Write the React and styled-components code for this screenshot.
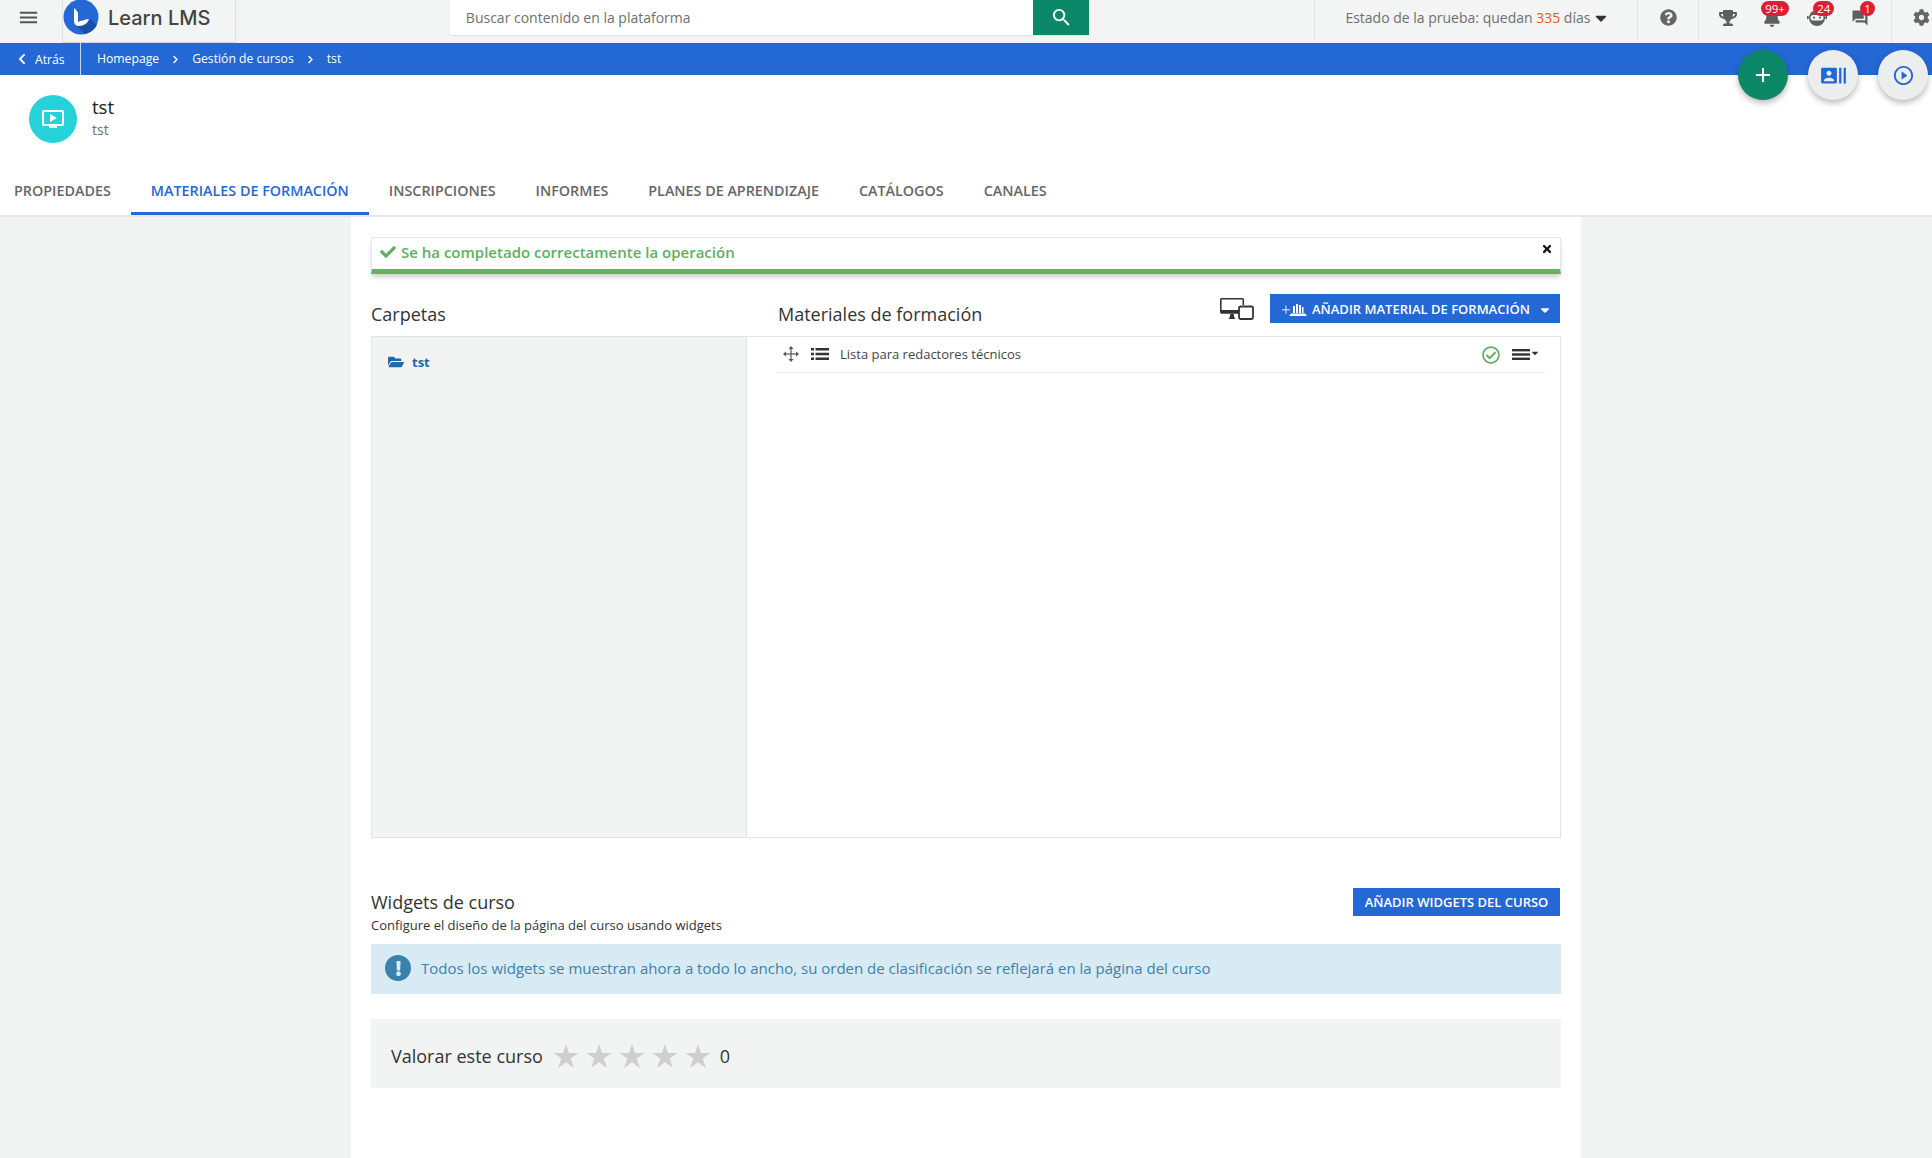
import React from 'react';
import styled, { createGlobalStyle } from 'styled-components';
import {
	FaBell,
	FaCaretDown,
	FaCheck,
	FaChevronLeft,
	FaChevronRight,
	FaCog,
	FaExclamation,
	FaFolderOpen,
	FaQuestionCircle,
	FaRegCheckCircle,
	FaTimes,
	FaTrophy,
} from 'react-icons/fa';
import {
	MdAdd,
	MdForum,
	MdMenu,
	MdOndemandVideo,
	MdPlayCircleOutline,
	MdRecentActors,
	MdSearch,
} from 'react-icons/md';

const GlobalStyle = createGlobalStyle`
	html, body {
		margin: 0;
		padding: 0;
		background: #f2f4f4;
	}
	* {
		box-sizing: border-box;
	}
`;

const Page = styled.div`
	position: relative;
	width: 1932px;
	height: 1158px;
	overflow: hidden;
	background: #f2f4f4;
	font-family: 'Open Sans', 'Noto Sans', sans-serif;
	color: #333;
`;

/* top bar */
const TopBar = styled.div`
	display: flex;
	height: 43px;
	background: #f3f4f4;
`;

const MenuButton = styled.div`
	width: 62px;
	display: flex;
	align-items: center;
	padding: 0 0 8px 17px;
	color: #555;
	font-size: 23px;
`;

const LogoBox = styled.div`
	width: 174px;
	display: flex;
	align-items: flex-start;
	gap: 9px;
	border-left: 1px solid #dfe1e1;
	border-right: 1px solid #dfe1e1;
	border-bottom: 1px solid #cfd3d8;
`;

const LogoText = styled.span`
	font-family: 'Inter', sans-serif;
	font-weight: 500;
	font-size: 20px;
	line-height: 36px;
	color: #444;
`;

const SearchBox = styled.div`
	margin-left: 214px;
	width: 640px;
	height: 35px;
	display: flex;
	background: #fff;
	border-radius: 0 0 2px 2px;
	box-shadow: 0 1px 1px rgba(0, 0, 0, 0.08);
`;

const SearchText = styled.div`
	flex: 1;
	padding-left: 16px;
	font-size: 14px;
	line-height: 35px;
	color: #6f6f6f;
`;

const SearchButton = styled.div`
	width: 56px;
	display: flex;
	align-items: center;
	justify-content: center;
	background: #0c8768;
	color: #fff;
	font-size: 23px;
`;

const TopSection = styled.div`
	display: flex;
	align-items: center;
	width: ${(p) => p.$width}px;
	margin-left: ${(p) => p.$offset || 0}px;
	padding-left: ${(p) => p.$pad}px;
	padding-bottom: 8px;
	border-left: 1px solid #e2e4e4;
	color: #666;
`;

const TrialText = styled.span`
	font-size: 14px;
	color: #6f6f6f;
	b {
		font-weight: 400;
		color: #f0522c;
	}
`;

const TrialCaret = styled.span`
	margin-left: 2px;
	font-size: 18px;
	color: #333;
	display: flex;
`;

const NoticeIcon = styled.div`
	position: relative;
	display: flex;
	justify-content: center;
	width: ${(p) => p.$width || 18}px;
	margin-right: ${(p) => p.$gap || 0}px;
	font-size: 18px;
	color: #5f5f5f;
`;

const Badge = styled.span`
	position: absolute;
	top: -8px;
	left: ${(p) => p.$left}px;
	min-width: 15px;
	height: 15px;
	padding: 0 4px;
	border-radius: 8px;
	background: #dc1f35;
	color: #fff;
	font-size: 11.5px;
	line-height: 15px;
	text-align: center;
`;

/* breadcrumb bar */
const CrumbBar = styled.div`
	display: flex;
	height: 32px;
	background: #2468d6;
	color: #fff;
	font-size: 12.2px;
`;

const BackLink = styled.div`
	width: 81px;
	display: flex;
	align-items: center;
	gap: 7px;
	padding-left: 16px;
	border-right: 1px solid #c9d9f3;
`;

const Crumbs = styled.div`
	display: flex;
	align-items: center;
	padding-left: 16px;
	padding-bottom: 1px;
`;

const CrumbArrow = styled.span`
	display: flex;
	margin: 1px 12px 0;
	font-size: 9px;
`;

const FloatButton = styled.div`
	position: absolute;
	top: 50px;
	left: ${(p) => p.$left}px;
	width: 50px;
	height: 50px;
	border-radius: 50%;
	display: flex;
	align-items: center;
	justify-content: center;
	background: ${(p) => (p.$green ? '#0c8768' : '#eceeee')};
	color: ${(p) => (p.$green ? '#fff' : '#2468d6')};
	font-size: ${(p) => p.$size}px;
	box-shadow: 0 3px 6px rgba(0, 0, 0, 0.28);
`;

/* course header */
const CourseHeader = styled.div`
	height: 80px;
	display: flex;
	align-items: flex-start;
	gap: 15px;
	padding: 20px 0 0 29px;
	background: #fff;
`;

const CourseBadge = styled.div`
	width: 48px;
	height: 48px;
	border-radius: 50%;
	background: #26d2da;
	color: #fff;
	display: flex;
	align-items: center;
	justify-content: center;
	font-size: 24px;
`;

const CourseName = styled.div`
	font-size: 18.5px;
	line-height: 23px;
	font-weight: 500;
	color: #222;
`;

const CourseSub = styled.div`
	font-size: 14px;
	line-height: 23px;
	color: #6f6f6f;
`;

/* tabs */
const TabBar = styled.div`
	display: flex;
	height: 62px;
	padding-top: 10px;
	background: #fff;
	border-bottom: 2px solid #e6e8e8;
`;

const Tab = styled.div`
	height: 50px;
	padding: 15px 20px 0;
	margin-left: ${(p) => p.$first || 0}px;
	font-size: 14.33px;
	line-height: 22px;
	font-weight: 600;
	color: ${(p) => (p.$active ? '#2468d6' : '#666')};
	border-bottom: 3px solid ${(p) => (p.$active ? '#2468d6' : 'transparent')};
`;

/* main column */
const Column = styled.div`
	width: 1230px;
	height: 951px;
	margin: 0 auto;
	padding: 20px 20px 0;
	background: #fff;
`;

const Alert = styled.div`
	height: 37px;
	display: flex;
	align-items: center;
	gap: 5px;
	padding: 0 8px 3px 8px;
	border: 1px solid #e5e7e7;
	border-bottom: 5px solid #66b168;
	box-shadow: 0 4px 5px -1px rgba(0, 0, 0, 0.2);
	color: #5fae62;
	font-size: 15px;
	font-weight: 600;
`;

const AlertClose = styled.span`
	margin-left: auto;
	margin-top: -6px;
	margin-right: -1px;
	display: flex;
	color: #111;
	font-size: 12px;
`;

const MaterialsHead = styled.div`
	display: flex;
	align-items: flex-end;
	height: 62px;
`;

const SectionTitle = styled.h2`
	margin: 0;
	font-size: 18px;
	line-height: 24px;
	font-weight: 400;
	color: #333;
	padding-top: ${(p) => p.$pt || 0}px;
	padding-bottom: ${(p) => p.$pb || 0}px;
`;

const FoldersTitle = styled(SectionTitle)`
	width: 407px;
`;

const HeadActions = styled.div`
	margin-left: auto;
	display: flex;
	align-items: center;
	gap: 16px;
	margin-bottom: 13px;
`;

const PrimaryButton = styled.div`
	display: flex;
	align-items: center;
	height: ${(p) => p.$height}px;
	width: ${(p) => p.$width}px;
	margin-right: 1px;
	padding-left: ${(p) => (p.$center ? 0 : 12)}px;
	justify-content: ${(p) => (p.$center ? 'center' : 'flex-start')};
	background: #2468d6;
	color: #fff;
	font-size: 13px;
	font-weight: 600;
	white-space: nowrap;
`;

const ButtonCaret = styled.span`
	display: flex;
	margin-left: 8px;
	margin-top: 3px;
	font-size: 14px;
`;

const Panel = styled.div`
	display: grid;
	grid-template-columns: 375px 1fr;
	height: 502px;
	border: 1px solid #e3e5e5;
`;

const FolderPane = styled.div`
	background: #f2f4f4;
	border-right: 1px solid #e3e5e5;
	padding: 16px 16px;
`;

const FolderItem = styled.div`
	display: flex;
	align-items: center;
	gap: 8px;
	color: #2468a8;
	font-size: 13px;
	font-weight: 700;
	svg {
		font-size: 16px;
	}
`;

const MaterialPane = styled.div`
	padding: 0 15px 0 30px;
`;

const MaterialRow = styled.div`
	display: flex;
	align-items: center;
	height: 36px;
	padding: 0 0 2px 6px;
	border-bottom: 1px solid #e3e5e5;
	font-size: 13px;
	color: #444;
`;

const RowIcon = styled.span`
	display: flex;
	margin-right: ${(p) => p.$gap}px;
	margin-top: 1px;
`;

const RowStatus = styled.span`
	margin-left: auto;
	display: flex;
	color: #5fae62;
	font-size: 18px;
	margin-right: 12px;
	margin-top: 2px;
`;

const RowMenu = styled.span`
	display: flex;
	align-items: flex-start;
	margin-right: 5px;
	margin-top: 2px;
	color: #333;
	span {
		display: flex;
		font-size: 10px;
		margin-left: 0;
		margin-top: -1px;
	}
`;

/* widgets */
const WidgetsHead = styled.div`
	display: flex;
	justify-content: space-between;
	align-items: flex-start;
	margin-top: 50px;
`;

const WidgetsSub = styled.div`
	font-size: 13px;
	line-height: 22px;
	color: #333;
`;

const InfoBox = styled.div`
	display: flex;
	align-items: center;
	gap: 10px;
	height: 50px;
	margin-top: 8px;
	padding: 0 0 2px 14px;
	background: #d8ebf5;
	color: #3a82ab;
	font-size: 15px;
`;

const InfoIcon = styled.span`
	width: 26px;
	height: 26px;
	border-radius: 50%;
	background: #3a82ab;
	color: #d8ebf5;
	display: flex;
	align-items: center;
	justify-content: center;
	font-size: 15px;
`;

const RatingBox = styled.div`
	display: flex;
	align-items: center;
	height: 69px;
	margin-top: 25px;
	padding: 5px 0 0 20px;
	background: #f2f4f4;
	font-size: 18px;
	color: #333;
`;

const Stars = styled.div`
	display: flex;
	gap: 7px;
	margin: 0 9px 0 10px;
`;

const LogoMark = () => (
	<svg width="36" height="35" viewBox="0 0 36 35">
		<circle cx="18" cy="17" r="17.5" fill="#2468d6" />
		<path d="M13 25 L20 19 H27 L34 25 A17.5 17.5 0 0 1 22 34 Z" fill="#1b50a8" />
		<path d="M11 8 C13 10 15 11 15 14 V22 C18 21 22 19 26 19 C25 23 21 26 16 26 C13 26 11 24 11 21 Z" fill="#fff" />
	</svg>
);

const NinjaIcon = () => (
	<svg width="20" height="18" viewBox="0 0 20 18" fill="#5f5f5f">
		<path d="M10 1a8 8 0 0 0-8 8 8 8 0 0 0 16 0 8 8 0 0 0-8-8z" />
		<path d="M0 6.5l3 2-3 2zM20 6.5l-3 2 3 2z" />
		<rect x="3.5" y="6" width="13" height="5.5" rx="2.7" fill="#f3f4f4" />
		<circle cx="7" cy="8.7" r="1.1" />
		<circle cx="13" cy="8.7" r="1.1" />
	</svg>
);

const MoveIcon = () => (
	<svg width="16" height="16" viewBox="0 0 16 16" fill="#555">
		<path d="M7.4 2.5h1.2v11H7.4z" />
		<path d="M2.5 7.4h11v1.2h-11z" />
		<path d="M8 0l2.5 3h-5zM8 16l-2.5-3h5zM0 8l3-2.5v5zM16 8l-3 2.5v-5z" />
	</svg>
);

const ListIcon = () => (
	<svg width="18" height="12" viewBox="0 0 18 12" fill="#333">
		<path d="M0 0h3v2.600H0zM4.500 0H18v2.600H4.500z" />
		<path d="M0 4.700h3v2.600H0zM4.500 4.700H18v2.600H4.500z" />
		<path d="M0 9.400h3V12H0zM4.500 9.400H18V12H4.500z" />
	</svg>
);

const LinesIcon = () => (
	<svg width="18" height="11" viewBox="0 0 18 11" fill="#333">
		<rect width="18" height="2.4" />
		<rect y="4.300" width="18" height="2.4" />
		<rect y="8.600" width="18" height="2.4" />
	</svg>
);

const DevicesIcon = () => (
	<svg width="34" height="22" viewBox="0 0 34 22" fill="none" stroke="#333" strokeWidth="1.6">
		<path d="M20 15H1.5a.8.8 0 0 1-.7-.8V1.600A.8.8 0 0 1 1.500.8h21a.8.8 0 0 1 .8.8V7" />
		<path d="M1 13.500h19" strokeWidth="3" />
		<path d="M8 21c2-.5 2-3 2.300-5h3.400c.3 2 .3 4.500 2.300 5z" fill="#333" stroke="none" />
		<rect x="19" y="8.500" width="14" height="12.500" rx="1.500" fill="#fff" strokeWidth="1.800" />
	</svg>
);

const AddMaterialIcon = () => (
	<svg width="26" height="16" viewBox="0 0 26 16" fill="#fff" style={{ marginRight: 4 }}>
		<path d="M0 8.400h8v.9H0z" />
		<path d="M3.500 4.800h.9v8h-.9z" />
		<path d="M11 5h2v7h-2zM14 3h2v9h-2zM17 4h2v8h-2zM20 6h1.500v6H20z" />
		<path d="M7 15l2-2.500h14l2 2.500z" />
	</svg>
);

const StarIcon = () => (
	<svg width="26" height="26" viewBox="0 0 26 26" fill="#cfcfcf">
		<path d="M13 1l3 9h9.500l-7.700 5.600 3 9.400-7.800-5.800L5.200 25l3-9.400L.5 10H10z" />
	</svg>
);

const App = () => {
	return (
		<Page>
			<GlobalStyle />
			<TopBar>
				<MenuButton>
					<MdMenu />
				</MenuButton>
				<LogoBox>
					<LogoMark />
					<LogoText>Learn LMS</LogoText>
				</LogoBox>
				<SearchBox>
					<SearchText>Buscar contenido en la plataforma</SearchText>
					<SearchButton>
						<MdSearch />
					</SearchButton>
				</SearchBox>
				<TopSection $width={323} $pad={30} $offset={225}>
					<TrialText>
						Estado de la prueba: quedan <b>335</b> días
					</TrialText>
					<TrialCaret>
						<FaCaretDown />
					</TrialCaret>
				</TopSection>
				<TopSection $width={61} $pad={22}>
					<FaQuestionCircle size={17} />
				</TopSection>
				<TopSection $width={193} $pad={20}>
					<NoticeIcon $gap={26}>
						<FaTrophy />
					</NoticeIcon>
					<NoticeIcon $gap={26}>
						<FaBell />
						<Badge $left={-2}>99+</Badge>
					</NoticeIcon>
					<NoticeIcon $gap={24} $width={20}>
						<NinjaIcon />
						<Badge $left={6}>24</Badge>
					</NoticeIcon>
					<NoticeIcon>
						<MdForum />
						<Badge $left={9}>1</Badge>
					</NoticeIcon>
				</TopSection>
				<TopSection $width={41} $pad={21}>
					<FaCog size={17} />
				</TopSection>
			</TopBar>

			<CrumbBar>
				<BackLink>
					<FaChevronLeft size={12} />
					Atrás
				</BackLink>
				<Crumbs>
					Homepage
					<CrumbArrow>
						<FaChevronRight />
					</CrumbArrow>
					Gestión de cursos
					<CrumbArrow>
						<FaChevronRight />
					</CrumbArrow>
					tst
				</Crumbs>
			</CrumbBar>

			<FloatButton $left={1738} $green $size={24}>
				<MdAdd />
			</FloatButton>
			<FloatButton $left={1808} $size={27}>
				<MdRecentActors />
			</FloatButton>
			<FloatButton $left={1878} $size={23}>
				<MdPlayCircleOutline />
			</FloatButton>

			<CourseHeader>
				<CourseBadge>
					<MdOndemandVideo />
				</CourseBadge>
				<div>
					<CourseName>tst</CourseName>
					<CourseSub>tst</CourseSub>
				</div>
			</CourseHeader>

			<TabBar>
				<Tab $first={-6}>PROPIEDADES</Tab>
				<Tab $active>MATERIALES DE FORMACIÓN</Tab>
				<Tab>INSCRIPCIONES</Tab>
				<Tab>INFORMES</Tab>
				<Tab>PLANES DE APRENDIZAJE</Tab>
				<Tab>CATÁLOGOS</Tab>
				<Tab>CANALES</Tab>
			</TabBar>

			<Column>
				<Alert>
					<FaCheck size={16} />
					Se ha completado correctamente la operación
					<AlertClose>
						<FaTimes />
					</AlertClose>
				</Alert>

				<MaterialsHead>
					<FoldersTitle $pb={10}>Carpetas</FoldersTitle>
					<SectionTitle $pb={10}>Materiales de formación</SectionTitle>
					<HeadActions>
						<DevicesIcon />
						<PrimaryButton $height={29} $width={290}>
							<AddMaterialIcon />
							AÑADIR MATERIAL DE FORMACIÓN
							<ButtonCaret>
								<FaCaretDown />
							</ButtonCaret>
						</PrimaryButton>
					</HeadActions>
				</MaterialsHead>

				<Panel>
					<FolderPane>
						<FolderItem>
							<FaFolderOpen />
							tst
						</FolderItem>
					</FolderPane>
					<MaterialPane>
						<MaterialRow>
							<RowIcon $gap={12}>
								<MoveIcon />
							</RowIcon>
							<RowIcon $gap={11}>
								<ListIcon />
							</RowIcon>
							Lista para redactores técnicos
							<RowStatus>
								<FaRegCheckCircle />
							</RowStatus>
							<RowMenu>
								<LinesIcon />
								<span>
									<FaCaretDown />
								</span>
							</RowMenu>
						</MaterialRow>
					</MaterialPane>
				</Panel>

				<WidgetsHead>
					<div>
						<SectionTitle $pt={2}>Widgets de curso</SectionTitle>
						<WidgetsSub>Configure el diseño de la página del curso usando widgets</WidgetsSub>
					</div>
					<PrimaryButton $height={28} $width={207} $center>
						AÑADIR WIDGETS DEL CURSO
					</PrimaryButton>
				</WidgetsHead>

				<InfoBox>
					<InfoIcon>
						<FaExclamation />
					</InfoIcon>
					Todos los widgets se muestran ahora a todo lo ancho, su orden de clasificación se reflejará en la página del curso
				</InfoBox>

				<RatingBox>
					Valorar este curso
					<Stars>
						<StarIcon />
						<StarIcon />
						<StarIcon />
						<StarIcon />
						<StarIcon />
					</Stars>
					0
				</RatingBox>
			</Column>
		</Page>
	);
};

export default App;
